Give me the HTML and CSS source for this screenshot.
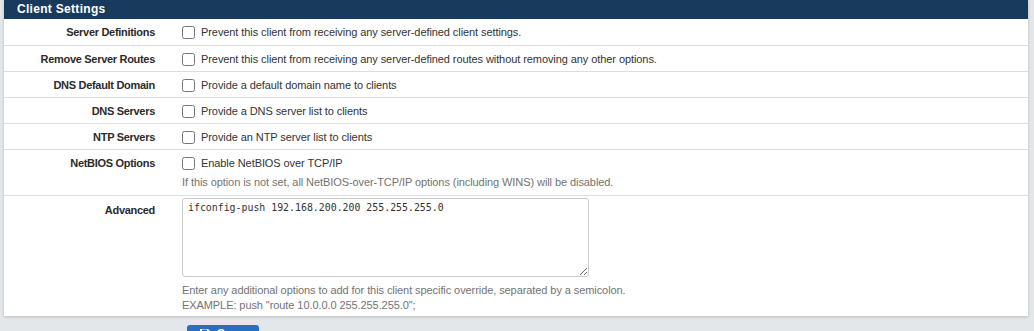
FILE: index.html
```html
<!DOCTYPE html>
<html lang="en">
<head>
    <meta charset="UTF-8">
    <title>Client Specific Overrides</title>
    <link rel="stylesheet" href="styles.css">
</head>
<body>
<div class="page">
    <div class="panel">
        <div class="panel-heading">Client Settings</div>

        <div class="form-row">
            <div class="form-label">Server Definitions</div>
            <div class="form-control">
                <label class="check"><input type="checkbox"> Prevent this client from receiving any server-defined client settings.</label>
            </div>
        </div>

        <div class="form-row">
            <div class="form-label">Remove Server Routes</div>
            <div class="form-control">
                <label class="check"><input type="checkbox"> Prevent this client from receiving any server-defined routes without removing any other options.</label>
            </div>
        </div>

        <div class="form-row">
            <div class="form-label">DNS Default Domain</div>
            <div class="form-control">
                <label class="check"><input type="checkbox"> Provide a default domain name to clients</label>
            </div>
        </div>

        <div class="form-row">
            <div class="form-label">DNS Servers</div>
            <div class="form-control">
                <label class="check"><input type="checkbox"> Provide a DNS server list to clients</label>
            </div>
        </div>

        <div class="form-row">
            <div class="form-label">NTP Servers</div>
            <div class="form-control">
                <label class="check"><input type="checkbox"> Provide an NTP server list to clients</label>
            </div>
        </div>

        <div class="form-row">
            <div class="form-label">NetBIOS Options</div>
            <div class="form-control">
                <label class="check"><input type="checkbox"> Enable NetBIOS over TCP/IP</label>
                <div class="help">If this option is not set, all NetBIOS-over-TCP/IP options (including WINS) will be disabled.</div>
            </div>
        </div>

        <div class="form-row tall">
            <div class="form-label">Advanced</div>
            <div class="form-control">
                <textarea class="advanced" spellcheck="false">ifconfig-push 192.168.200.200 255.255.255.0</textarea>
                <div class="help">Enter any additional options to add for this client specific override, separated by a semicolon.<br>EXAMPLE: push "route 10.0.0.0 255.255.255.0";</div>
            </div>
        </div>
    </div>

    <div class="actions">
        <button class="btn-save">
            <svg width="12" height="12" viewBox="0 0 12 12"><path d="M1 1h8l2 2v8H1z" fill="#fff"/><rect x="3" y="1.5" width="5" height="3" fill="#2b6cc4"/></svg>
            Save
        </button>
    </div>
</div>
</body>
</html>
```

FILE: styles.css
```css
* {
    box-sizing: border-box;
}

body {
    margin: 0;
    background: #e3e7ea;
    font-family: 'Liberation Sans', Arial, sans-serif;
    font-size: 11px;
    color: #333;
    overflow: hidden;
}

.page {
    padding: 0 6px 0 4px;
}

.panel {
    background: #fff;
    box-shadow: 0 1px 3px rgba(0, 0, 0, 0.18);
}

.panel-heading {
    background: #183b5d;
    color: #fff;
    font-weight: 700;
    font-size: 12px;
    letter-spacing: 0.3px;
    line-height: 19px;
    padding: 0 13px;
}

.form-row {
    display: grid;
    grid-template-columns: 151px 1fr;
    column-gap: 27px;
    padding: 6px 0 5px;
    border-bottom: 1px solid #ddd;
    line-height: 14px;
}

.form-row:nth-child(2) {
    padding-bottom: 6px;
}

.form-row.tall {
    border-bottom: none;
    padding: 2px 0 3px;
}

.form-label {
    text-align: right;
    font-weight: 700;
    letter-spacing: -0.3px;
    color: #2b2b2b;
}

.tall .form-label {
    padding-top: 5px;
}

.check {
    display: flex;
    align-items: center;
    gap: 6px;
    letter-spacing: -0.08px;
}

.check input {
    margin: 0;
    width: 13px;
    height: 13px;
}

.help {
    color: #737373;
    line-height: 15px;
    margin-top: 5px;
    letter-spacing: -0.08px;
}

.advanced {
    display: block;
    width: 407px;
    height: 79px;
    border: 1px solid #ccc;
    border-radius: 3px;
    padding: 2px 5px;
    font-family: 'DejaVu Sans Mono', monospace;
    font-size: 9.9px;
    line-height: 14px;
    color: #333;
    resize: both;
}

.tall .help {
    margin-top: 6px;
}

.actions {
    padding: 9px 0 0 183px;
}

.btn-save {
    display: flex;
    align-items: flex-start;
    gap: 6px;
    background: #2b6cc4;
    border: none;
    border-radius: 3px;
    color: #fff;
    font-family: 'Liberation Sans', Arial, sans-serif;
    font-size: 12px;
    font-weight: 700;
    line-height: 14px;
    padding: 2px 12px 0 12px;
    width: 72px;
    height: 26px;
}

.btn-save svg {
    margin-top: 1px;
}
```
